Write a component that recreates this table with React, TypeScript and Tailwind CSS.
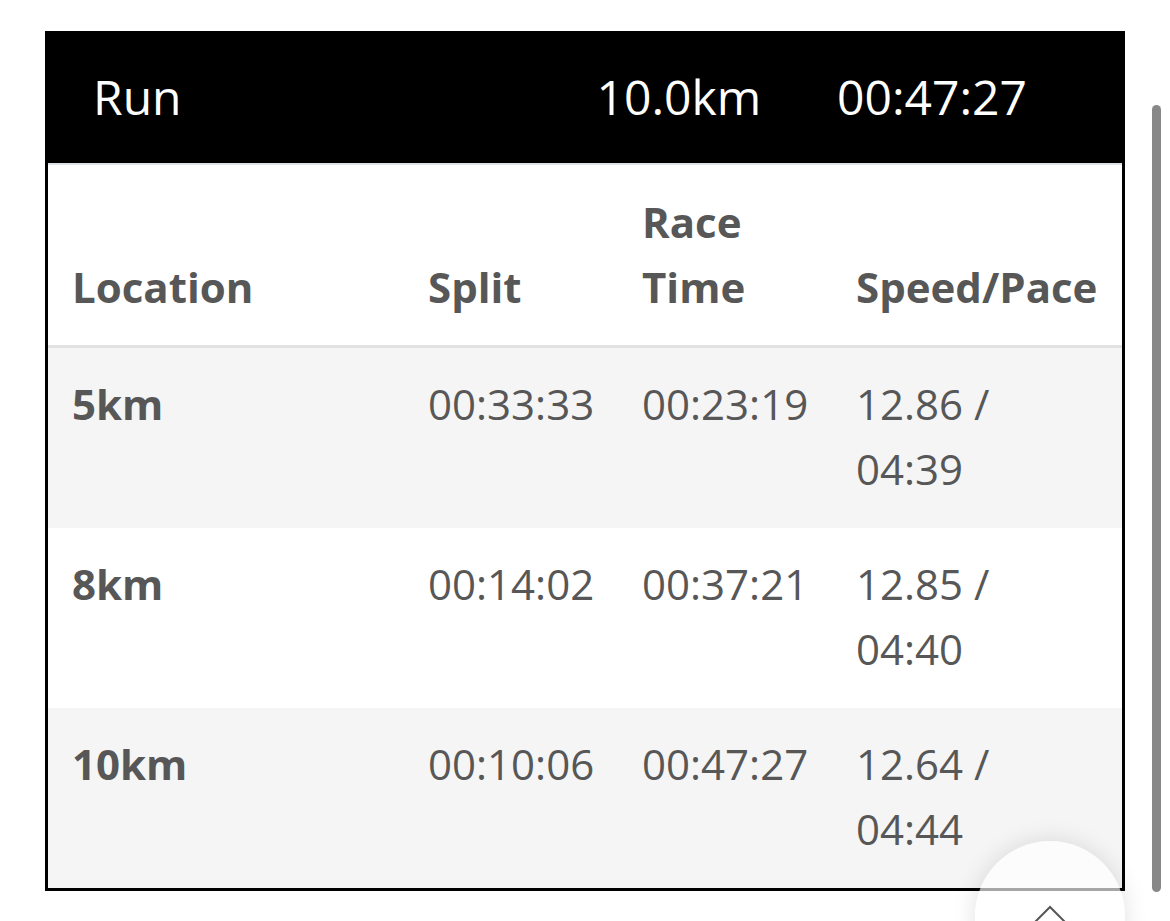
const rows = [
  { location: "5km", split: "00:33:33", race: "00:23:19", speed: "12.86 /", pace: "04:39" },
  { location: "8km", split: "00:14:02", race: "00:37:21", speed: "12.85 /", pace: "04:40" },
  { location: "10km", split: "00:10:06", race: "00:47:27", speed: "12.64 /", pace: "04:44" },
];

export default function App() {
  return (
    <div className="relative h-[921px] w-[1170px] overflow-hidden bg-white font-['Open_Sans',sans-serif]">
      <div className="ml-[45px] mt-[31px] w-[1080px] border-x-[3px] border-b-[3px] border-black">
        {/* summary bar */}
        <div className="flex h-[132px] items-center bg-black pl-[45px] pr-[95px] text-[48px] text-white">
          <span>Run</span>
          <span className="ml-auto">10.0km</span>
          <span className="ml-[76px]">00:47:27</span>
        </div>
        <div className="h-[2px] bg-[#dee2e6]" />

        <table className="w-full table-fixed border-collapse text-[42px] leading-[65px] text-[#575757]">
          <colgroup>
            <col className="w-[356px]" />
            <col className="w-[214px]" />
            <col className="w-[214px]" />
            <col />
          </colgroup>
          <thead>
            <tr className="border-b-[3px] border-[#e2e2e2] font-bold">
              <th className="pb-[26px] pl-[24px] pr-[25px] pt-[24px] text-left align-bottom">Location</th>
              <th className="pb-[26px] pl-[24px] pr-[25px] pt-[24px] text-left align-bottom">Split</th>
              <th className="pb-[26px] pl-[24px] pr-[25px] pt-[24px] text-left align-bottom">Race Time</th>
              <th className="whitespace-nowrap pb-[26px] pl-[24px] pr-[25px] pt-[24px] text-left align-bottom">Speed/Pace</th>
            </tr>
          </thead>
          <tbody>
            {rows.map((r, i) => (
              <tr key={r.location} className={i % 2 === 0 ? "bg-[#f5f5f5]" : "bg-white"}>
                <td className="pb-[27px] pl-[24px] pr-[25px] pt-[23px] align-top font-bold">{r.location}</td>
                <td className="pb-[27px] pl-[24px] pr-[25px] pt-[23px] align-top">{r.split}</td>
                <td className="pb-[27px] pl-[24px] pr-[25px] pt-[23px] align-top">{r.race}</td>
                <td className="pb-[27px] pl-[24px] pr-[25px] pt-[23px] align-top">
                  {r.speed}
                  <br />
                  {r.pace}
                </td>
              </tr>
            ))}
          </tbody>
        </table>
      </div>

      {/* scroll indicator */}
      <div className="absolute left-[1152px] top-[105px] h-[787px] w-[9px] rounded-full bg-[#888]" />

      {/* back to top */}
      <button className="absolute left-[975px] top-[841px] flex h-[150px] w-[150px] justify-center rounded-full bg-white/65 pt-[62px] shadow-[0_0_24px_rgba(0,0,0,0.12)]">
        <svg width="40" height="22" viewBox="0 0 40 22" fill="none" stroke="#555" strokeWidth="2">
          <polyline points="3,21 20,4 37,21" />
        </svg>
      </button>
    </div>
  );
}
